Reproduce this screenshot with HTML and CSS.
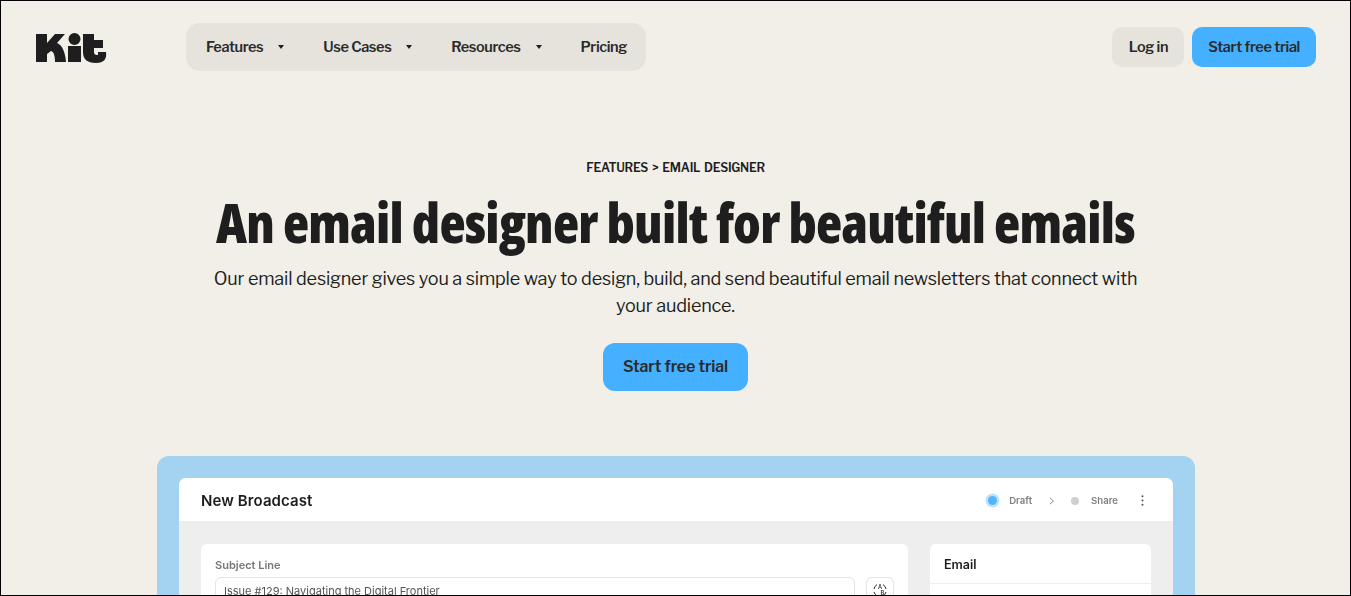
FILE: index.html
```html
<!DOCTYPE html>
<html lang="en">
<head>
<meta charset="utf-8">
<title>Email Designer | Kit</title>
<link rel="stylesheet" href="styles.css">
</head>
<body>
<div class="page">
  <header class="header">
    <a class="logo" href="#" aria-label="Kit">
      <svg width="71" height="32" viewBox="0 0 71 32"><path fill="#1e1e1e" d="M0 3h11v9L19 3h10l-8 9c5 2 8 8 9 19H19c0-6-1-10-4-11l-4 3v8H0zM32 15h13v16H32zM38.5 2a6 6 0 1 1 0 12a6 6 0 0 1 0-12zM47 3h11v6h9v8H58v4c0 2 1 3 3 3h1v-3h8c1 7-2 11-10 11c-9 0-13-4-13-11z"/></svg>
    </a>
    <nav class="nav">
      <a class="nav-item has-caret" href="#">Features</a>
      <a class="nav-item has-caret" href="#">Use Cases</a>
      <a class="nav-item has-caret" href="#">Resources</a>
      <a class="nav-item" href="#">Pricing</a>
    </nav>
    <div class="actions">
      <a class="btn btn-muted" href="#">Log in</a>
      <a class="btn btn-blue" href="#">Start free trial</a>
    </div>
  </header>
  <main class="hero">
    <p class="crumbs">FEATURES &gt; EMAIL DESIGNER</p>
    <h1 class="title">An email designer built for beautiful emails</h1>
    <p class="lead">Our email designer gives you a simple way to design, build, and send beautiful email newsletters that connect with your audience.</p>
    <a class="btn-cta" href="#">Start free trial</a>
  </main>
  <section class="showcase">
    <div class="app">
      <div class="app-top">
        <span class="app-title">New Broadcast</span>
        <div class="steps">
          <span class="dot dot-on"></span><span class="step">Draft</span>
          <svg class="chev" width="6" height="8" viewBox="0 0 6 8"><path d="M1 .8 4.4 4 1 7.2" fill="none" stroke="#8a8a8a" stroke-width="1"/></svg>
          <span class="dot dot-off"></span><span class="step">Share</span>
          <svg class="more" width="3" height="11" viewBox="0 0 3 11"><circle cx="1.5" cy="1.2" r="1" fill="#555"/><circle cx="1.5" cy="5.5" r="1" fill="#555"/><circle cx="1.5" cy="9.8" r="1" fill="#555"/></svg>
        </div>
      </div>
      <div class="app-body">
        <div class="card card-main">
          <div class="label">Subject Line</div>
          <div class="subject-row">
            <div class="input">Issue #129: Navigating the Digital Frontier</div>
            <div class="ab">
              <svg width="16" height="16" viewBox="0 0 16 16" fill="none" stroke="#333" stroke-width="1"><path d="M2 7A6 6 0 0 1 5 2.6M11 2.6A6 6 0 0 1 14 7M14 10A6 6 0 0 1 11 14M5 14A6 6 0 0 1 2 10"/><text x="6" y="6.5" class="ab-letter">A</text><text x="8.5" y="13" class="ab-letter">B</text></svg>
            </div>
          </div>
        </div>
        <div class="card card-side">
          <div class="side-title">Email</div>
        </div>
      </div>
    </div>
  </section>
</div>
</body>
</html>
```
FILE: styles.css
```css
* { box-sizing: border-box; }
html, body { margin: 0; height: 100%; overflow: hidden; }
body { background: #f2efe8; }
a { text-decoration: none; color: inherit; }
p, h1 { margin: 0; }

.page {
  height: 596px;
  border: 1px solid #000;
  overflow: hidden;
  font-family: "Libre Franklin", "Liberation Sans", Arial, sans-serif;
  color: #1e1e1e;
}

.header {
  display: flex;
  align-items: center;
  height: 92px;
  padding: 0 34px 0 35px;
}
.logo { display: flex; width: 150px; }
.nav {
  display: flex;
  align-items: center;
  height: 48px;
  padding: 0 19px 0 20px;
  background: #e6e3dc;
  border-radius: 14px;
  font-size: 14.5px;
  font-weight: 600;
  letter-spacing: -0.4px;
  color: #2a2a2a;
}
.nav-item { display: flex; align-items: center; }
.has-caret { margin-right: 39px; }
.has-caret::after {
  content: "";
  margin-left: 15px;
  border-left: 3px solid transparent;
  border-right: 3px solid transparent;
  border-top: 4px solid #1e1e1e;
}
.actions { display: flex; gap: 8px; margin-left: auto; }
.btn {
  display: flex;
  align-items: center;
  height: 40px;
  border-radius: 10px;
  font-size: 14.5px;
  font-weight: 600;
  letter-spacing: -0.35px;
  color: #2a2a2a;
}
.btn-muted { padding: 0 16px 0 17px; background: #e6e3dc; }
.btn-blue { padding: 0 16px; background: #45b0ff; }

.hero {
  display: flex;
  flex-direction: column;
  align-items: center;
  text-align: center;
}
.crumbs {
  margin-top: 67px;
  font-size: 12px;
  line-height: 16px;
  font-weight: 600;
  letter-spacing: -0.25px;
  word-spacing: 1.6px;
}
.title {
  margin-top: 14px;
  font-family: "Open Sans", "Liberation Sans", sans-serif;
  font-stretch: 75%;
  font-size: 54px;
  line-height: 64px;
  font-weight: 800;
  letter-spacing: -0.73px;
  color: #1e1e1e;
  white-space: nowrap;
}
.lead {
  width: 940px;
  margin-top: 11px;
  font-size: 18px;
  line-height: 27px;
  letter-spacing: -0.17px;
}
.btn-cta {
  display: flex;
  align-items: center;
  height: 48px;
  margin-top: 24px;
  padding: 0 20px 2px;
  border-radius: 12px;
  background: #45b0ff;
  font-size: 16px;
  font-weight: 600;
  letter-spacing: -0.15px;
  color: #2a2a2a;
}

.showcase {
  width: 1038px;
  height: 300px;
  margin: 65px 0 0 156px;
  padding: 22px;
  background: #a3d3f1;
  border-radius: 12px;
}
.app {
  height: 100%;
  border-radius: 7px;
  overflow: hidden;
  background: #eee;
  font-family: Inter, "Liberation Sans", sans-serif;
  filter: blur(0.35px);
}
.app-top {
  display: flex;
  align-items: center;
  justify-content: space-between;
  height: 43px;
  padding: 2px 29px 0 22px;
  background: #fff;
}
.app-title { font-size: 15px; font-weight: 600; letter-spacing: 0.1px; color: #1c1c1c; }
.steps { display: flex; align-items: center; font-size: 9.6px; color: #808080; font-weight: 600; }
.dot { border-radius: 50%; }
.dot-on {
  width: 9px; height: 9px;
  background: #55b4fb;
  box-shadow: 0 0 0 2.5px #bfe2fb;
  margin-right: 12px;
}
.dot-off { width: 8px; height: 8px; background: #cfcfcf; margin-right: 12px; }
.chev { margin: 0 16px 0 17px; }
.more { margin-left: 23px; }

.app-body {
  display: flex;
  gap: 22px;
  padding: 23px 22px 0;
}
.card { background: #fff; border-radius: 6px; height: 200px; }
.card-main { flex: 1; padding: 14px 14px 0; }
.label { font-size: 11px; line-height: 14px; font-weight: 600; color: #777; }
.subject-row { display: flex; gap: 11px; margin-top: 5px; }
.input {
  flex: 1;
  height: 32px;
  padding: 6px 8px;
  border: 1px solid #e3e3e3;
  border-radius: 6px;
  font-size: 11px;
  line-height: 14px;
  color: #555;
}
.ab {
  display: flex;
  align-items: flex-start;
  justify-content: center;
  width: 28px;
  height: 32px;
  padding-top: 4px;
  border: 1px solid #e3e3e3;
  border-radius: 6px;
}
.ab-letter { font-size: 5.5px; font-weight: 600; fill: #333; stroke: none; }
.card-side { width: 221px; }
.side-title {
  height: 40px;
  padding: 0 14px;
  border-bottom: 1px solid #eee;
  font-size: 12.5px;
  line-height: 41px;
  font-weight: 600;
  color: #1c1c1c;
}
```
